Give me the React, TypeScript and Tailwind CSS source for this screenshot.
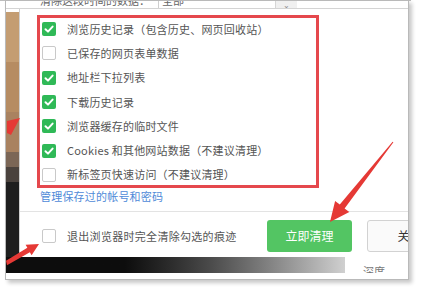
import React from "react";

const rows: { label: string; checked: boolean }[] = [
  { label: "浏览历史记录（包含历史、网页回收站）", checked: true },
  { label: "已保存的网页表单数据", checked: false },
  { label: "地址栏下拉列表", checked: true },
  { label: "下载历史记录", checked: true },
  { label: "浏览器缓存的临时文件", checked: true },
  { label: "Cookies 和其他网站数据（不建议清理）", checked: true },
  { label: "新标签页快速访问（不建议清理）", checked: false },
];

function Box({ checked }: { checked: boolean }) {
  return checked ? (
    <span className="flex h-[14px] w-[14px] shrink-0 items-center justify-center rounded-[2px] bg-[#2fb957]">
      <svg width="12" height="12" viewBox="0 0 12 12">
        <polyline points="2.5,6.2 5,8.6 9.6,3.6" fill="none" stroke="#fff" strokeWidth="2" strokeLinecap="round" strokeLinejoin="round" />
      </svg>
    </span>
  ) : (
    <span className="block h-[14px] w-[14px] shrink-0 rounded-[2px] border border-[#c9c9c9] bg-white" />
  );
}

export default function App() {
  return (
    <div className="relative h-[287px] w-[421px] overflow-hidden bg-white font-['Noto_Sans_CJK_SC',sans-serif]">
      <div className="h-px w-[411px] bg-[#bdbdbd]" />
      <div className="ml-[5px] mt-[-1px] h-[280px] w-[404px] border border-[#b9b9b9] bg-white shadow-[3px_3px_4px_rgba(0,0,0,0.22)]">
        <div className="flex h-[278px] w-[402px] flex-col overflow-hidden">
          {/* clipped top row */}
          <div className="flex h-[8px] shrink-0 overflow-hidden border-b border-[#d4d4d4]">
            <div className="w-[34px] shrink-0" />
            <div className="mt-[-8px] w-[118px] shrink-0 text-[11px] leading-[14px] text-[#666]">清除这段时间的数据：</div>
            <div className="flex w-[139px] shrink-0 border-l border-[#cfcfcf]">
              <div className="mt-[-8px] flex-1 pl-[3px] text-[11px] leading-[14px] text-[#666]">全部</div>
              <div className="flex w-[22px] items-start justify-center border-l border-[#d6d6d6] bg-[#f0f0f0] text-[8px] leading-none text-[#888]">⌄</div>
            </div>
          </div>
          {/* main */}
          <div className="flex h-[248px] shrink-0">
            <div className="flex w-[13px] shrink-0 flex-col">
              <div className="h-[3px] bg-white" />
              <div className="h-[50px] bg-[#c49d72]" />
              <div className="h-[50px] bg-[#b68c62]" />
              <div className="h-[40px] bg-[#a98260]" />
              <div className="h-[15px] bg-[#7b6656]" />
              <div className="h-[15px] bg-[#4a423d]" />
              <div className="flex-1 bg-[#1e1e1e]" />
            </div>
            <div className="flex w-[389px] shrink-0 flex-col overflow-hidden border-l border-[#d0d0d0] bg-white">
              <div className="pl-[22px] pt-[8px]">
                {rows.map((r) => (
                  <div key={r.label} className="flex h-[24.3px] items-center">
                    <Box checked={r.checked} />
                    <span className="ml-[11px] whitespace-nowrap text-[11px] leading-none tracking-[0.2px] text-[#555]">{r.label}</span>
                  </div>
                ))}
              </div>
              <div className="flex h-[18px] items-center pl-[20px] text-[11px] leading-none tracking-[0.2px] text-[#4f8ad8]">管理保存过的帐号和密码</div>
              <div className="mt-[6px] flex h-[45px] items-center border-t border-[#e3e3e3] pl-[22px] pt-[4px]">
                <Box checked={false} />
                <span className="ml-[11px] w-[190px] shrink-0 whitespace-nowrap text-[11px] leading-none tracking-[0.3px] text-[#555]">退出浏览器时完全清除勾选的痕迹</span>
                <div className="ml-[10px] flex h-[32px] w-[85px] shrink-0 items-center justify-center rounded-[3px] bg-[#53c563] text-[12px] text-white">立即清理</div>
                <div className="ml-[15px] flex h-[32px] w-[85px] shrink-0 items-center justify-center rounded-[3px] border border-[#d2d2d2] bg-[#fafafa] text-[12px] text-[#333]">关闭</div>
              </div>
            </div>
          </div>
          {/* bottom photo strip */}
          <div className="flex h-[16px] shrink-0">
            <div className="w-[339px] shrink-0 bg-gradient-to-r from-[#0d0d0d] from-35% via-[#4a4a4a] via-60% to-[#d0d0d0]" />
            <div className="flex-1 overflow-hidden bg-white pl-[18px]">
              <div className="mt-[7px] text-[11px] leading-[14px] text-[#777]">深度</div>
            </div>
          </div>
        </div>
      </div>
      {/* annotations */}
      <div className="pointer-events-none absolute left-[37px] top-[15px] h-[173px] w-[282px] border-[3px] border-[#e5484d]" />
      <svg className="pointer-events-none absolute left-0 top-0" width="421" height="287" viewBox="0 0 421 287">
        <polygon fill="#e53935" points="392.6,141.7 393.4,142.3 344.6,208.4 349.3,212.1 330,222 335.1,200.9 339.8,204.6" />
        <polygon fill="#e53935" points="6,260.8 27.35,247.8 25.6,244.8 39,244 31.6,255.2 29.85,252.2 7,265.2" />
        <polygon fill="#e53935" points="20,118 7,121 7,133 11,135" />
      </svg>
    </div>
  );
}
